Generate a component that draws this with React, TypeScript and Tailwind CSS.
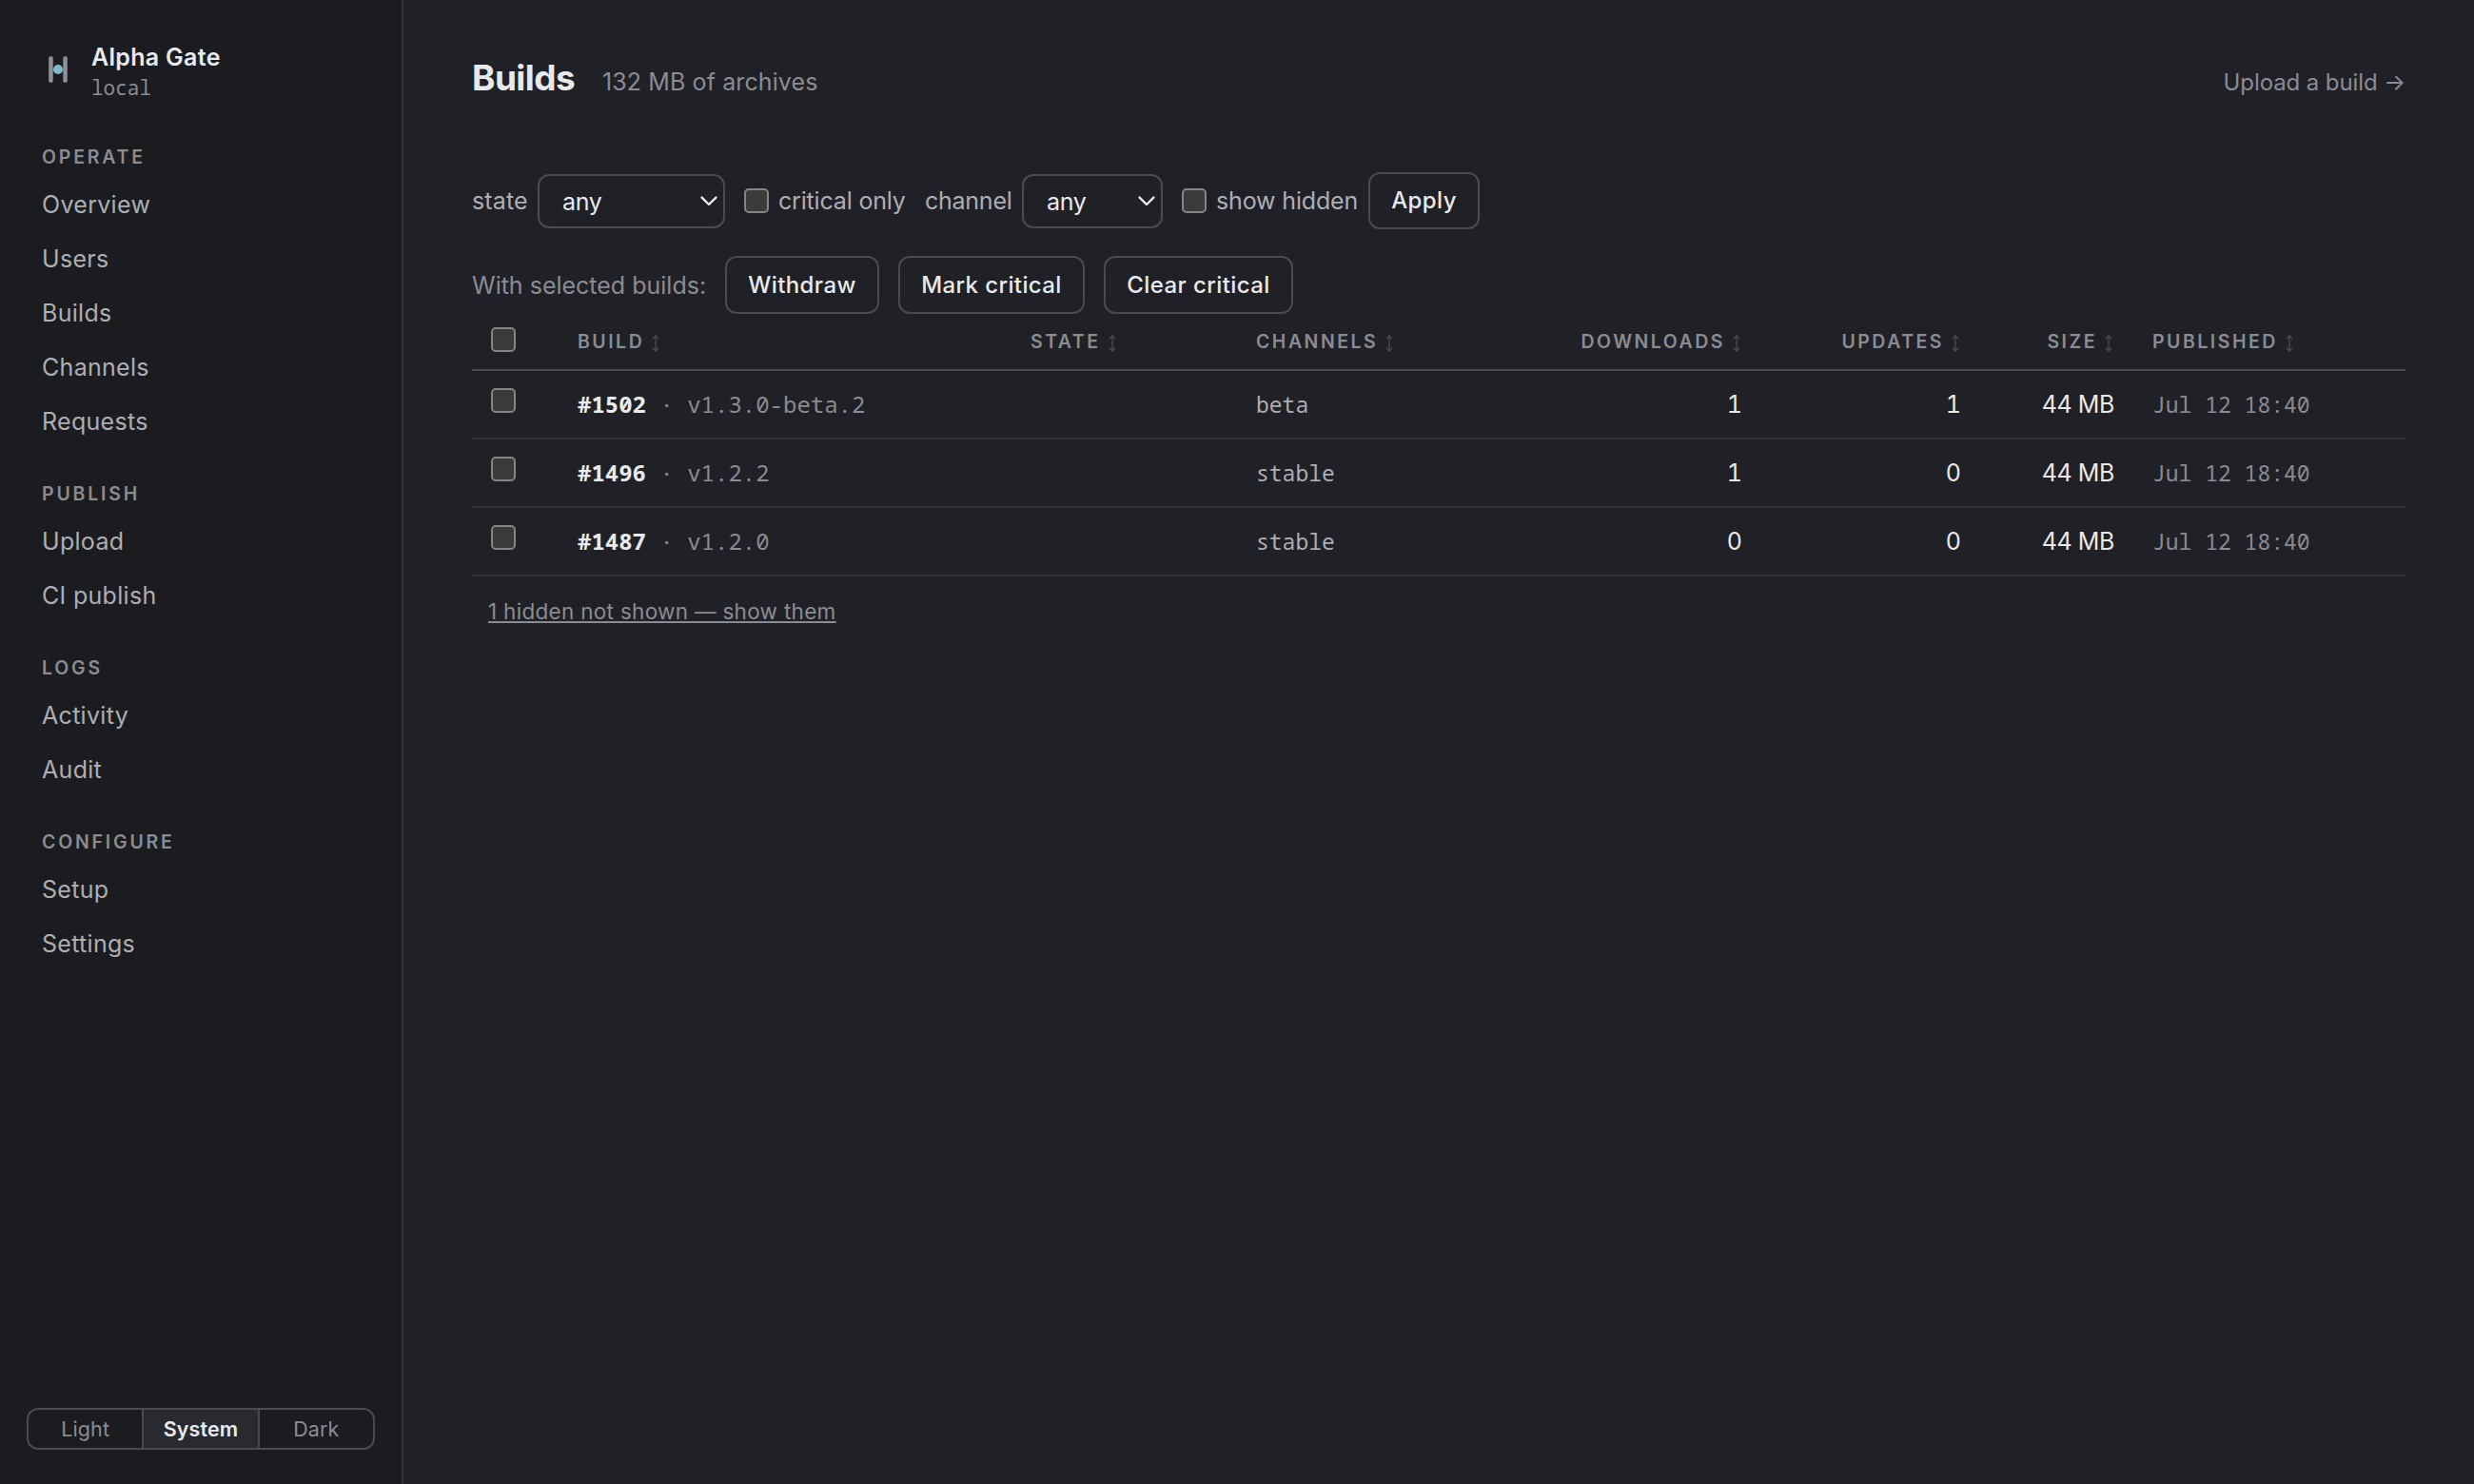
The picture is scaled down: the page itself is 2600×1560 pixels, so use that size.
import React from 'react';
import clsx from 'clsx';

interface NavGroup {
  title: string;
  items: string[];
}

interface Build {
  id: string;
  version: string;
  channel: string;
  downloads: number;
  updates: number;
  size: string;
  published: string;
}

const NAV: NavGroup[] = [
  { title: 'Operate', items: ['Overview', 'Users', 'Builds', 'Channels', 'Requests'] },
  { title: 'Publish', items: ['Upload', 'CI publish'] },
  { title: 'Logs', items: ['Activity', 'Audit'] },
  { title: 'Configure', items: ['Setup', 'Settings'] },
];

const BUILDS: Build[] = [
  { id: '#1502', version: 'v1.3.0-beta.2', channel: 'beta', downloads: 1, updates: 1, size: '44 MB', published: 'Jul 12 18:40' },
  { id: '#1496', version: 'v1.2.2', channel: 'stable', downloads: 1, updates: 0, size: '44 MB', published: 'Jul 12 18:40' },
  { id: '#1487', version: 'v1.2.0', channel: 'stable', downloads: 0, updates: 0, size: '44 MB', published: 'Jul 12 18:40' },
];

const THEMES = ['Light', 'System', 'Dark'];

const MONO = "font-['Noto_Sans_Mono','DejaVu_Sans_Mono',monospace]";

const Logo: React.FC = () => (
  <svg width="32" height="32" viewBox="0 0 32 32" className="mt-4 shrink-0">
    <rect x="6.2" y="1.3" width="4.5" height="27.4" rx="1.6" fill="#8f9098" />
    <rect x="21.3" y="1.3" width="4.5" height="27.4" rx="1.6" fill="#8f9098" />
    <circle cx="16" cy="15" r="5.1" fill="#7fb8c8" />
  </svg>
);

const SortIcon: React.FC = () => (
  <svg width="8" height="18" viewBox="0 0 8 18" fill="none" stroke="#4c4d52" strokeWidth="1.3" className="shrink-0">
    <path d="M4 1v16M1 4.4 4 .9l3 3.5M1 13.6l3 3.5 3-3.5" />
  </svg>
);

const Checkbox: React.FC = () => (
  <span role="checkbox" aria-checked="false" className="block size-[26px] shrink-0 rounded-[5px] border-2 border-[#858585] bg-[#3b3b3b]" />
);

const Select: React.FC<{ value: string; className: string }> = ({ value, className }) => (
  <div
    className={clsx(
      'mt-px flex h-[57px] items-center justify-between rounded-xl border-2 border-[#4a4b50] pt-px pr-[6px] pl-6 leading-[30px] tracking-[-0.4px] text-[#e8e9ed]',
      className,
    )}
  >
    <span>{value}</span>
    <svg width="18" height="12" viewBox="0 0 18 12" fill="none" stroke="#e8e9ed" strokeWidth="2.4" strokeLinecap="round" strokeLinejoin="round">
      <path d="M1.6 1.6 9 9l7.4-7.4" />
    </svg>
  </div>
);

const Button: React.FC<{ className: string; children: React.ReactNode }> = ({ className, children }) => (
  <button
    className={clsx(
      'flex items-center justify-center rounded-xl border-2 border-[#4a4b50] text-[24px] leading-[30px] font-medium tracking-[0.4px] text-[#e8e9ed]',
      className,
    )}
  >
    {children}
  </button>
);

const Th: React.FC<{ label: string; right?: boolean }> = ({ label, right }) => (
  <th className="px-5 py-[17px] font-semibold">
    <span className={clsx('flex items-center', right && 'justify-end pr-[2px]')}>
      <span className="mr-2">{label}</span>
      <span className="pt-[4px]">
        <SortIcon />
      </span>
    </span>
  </th>
);

const Sidebar: React.FC = () => (
  <aside className="flex w-[424px] shrink-0 flex-col border-r-2 border-[#36373c] bg-[#1b1c20] pt-[42px] pb-9">
    <div className="flex items-start gap-[19px] pl-[45px]">
      <Logo />
      <div className="pt-px">
        <div className="text-[25px] leading-[34px] font-semibold tracking-[0.3px] text-[#e8e9ed]">Alpha Gate</div>
        <div className={clsx(MONO, 'text-[21px] leading-[30px] text-[#8b8c92]')}>local</div>
      </div>
    </div>

    <nav className="mt-[46px] flex flex-col gap-[35px] pl-[44px]">
      {NAV.map((group) => (
        <div key={group.title}>
          <h2 className="mb-[10px] text-[19.5px] leading-6 font-semibold tracking-[2.8px] text-[#8b8c92] uppercase">
            {group.title}
          </h2>
          {group.items.map((item) => (
            <a key={item} className="block pt-[10px] pb-[11px] text-[25px] leading-9 tracking-[0.3px] text-[#adaeb4]">
              {item}
            </a>
          ))}
        </div>
      ))}
    </nav>

    <div className="mt-auto ml-[28px] flex h-11 w-[366px] divide-x-2 divide-[#4a4b50] overflow-hidden rounded-xl border-2 border-[#4a4b50] text-[21.5px]">
      {THEMES.map((theme) => (
        <button
          key={theme}
          className={clsx(
            'flex flex-auto basis-0 items-center justify-center leading-[26px] tracking-[0.1px]',
            theme === 'System' ? 'bg-[#292a2f] font-semibold text-[#e8e9ed]' : 'text-[#8b8c92]',
          )}
        >
          {theme}
        </button>
      ))}
    </div>
  </aside>
);

export default function App() {
  return (
    <div className="flex h-[1560px] w-[2600px] overflow-hidden bg-[#202126] font-['Inter',sans-serif] text-[25px] leading-[30px] text-[#e8e9ed]">
      <Sidebar />

      <main className="flex-1 px-[72px] pt-[59px]">
        <header className="flex items-baseline">
          <h1 className="text-[37px] leading-[45px] font-bold tracking-[-0.6px]">Builds</h1>
          <span className="ml-[29px] tracking-[0.1px] text-[#8b8c92]">132 MB of archives</span>
          <a className="ml-auto text-[24px] tracking-[-0.1px] text-[#8b8c92]">Upload a build →</a>
        </header>

        {/* Filters */}
        <div className="mt-[77px] flex h-[60px] items-center text-[#adaeb4]">
          <span className="w-[69px] tracking-[0.15px]">state</span>
          <Select value="any" className="w-[197px]" />
          <span className="mr-[10px] ml-5">
            <Checkbox />
          </span>
          <span className="w-[154px] tracking-[-0.18px]">critical only</span>
          <span className="w-[102px] tracking-[-0.25px]">channel</span>
          <Select value="any" className="w-[148px]" />
          <span className="mr-[10px] ml-5">
            <Checkbox />
          </span>
          <span className="w-[160px] tracking-[-0.15px]">show hidden</span>
          <Button className="h-[60px] w-[117px]">Apply</Button>
        </div>

        {/* Bulk actions */}
        <div className="mt-7 flex items-center gap-5">
          <span className="w-[246px] pt-px whitespace-nowrap text-[#8b8c92]">With selected builds:</span>
          <Button className="h-[61px] w-[162px]">Withdraw</Button>
          <Button className="h-[61px] w-[196px]">Mark critical</Button>
          <Button className="h-[61px] w-[199px]">Clear critical</Button>
        </div>

        <table className="w-full table-fixed border-collapse">
          <colgroup>
            <col className="w-[91px]" />
            <col className="w-[476px]" />
            <col className="w-[237px]" />
            <col className="w-[300px]" />
            <col className="w-[251px]" />
            <col className="w-[230px]" />
            <col className="w-[161px]" />
            <col className="w-[286px]" />
          </colgroup>
          <thead>
            <tr className="border-b-2 border-[#4a4b50] text-left text-[19.5px] leading-6 tracking-[2.5px] text-[#8b8c92] uppercase">
              <th className="pt-[14px] pl-5 align-top">
                <Checkbox />
              </th>
              <Th label="Build" />
              <Th label="State" />
              <Th label="Channels" />
              <Th label="Downloads" right />
              <Th label="Updates" right />
              <Th label="Size" right />
              <Th label="Published" />
            </tr>
          </thead>
          <tbody>
            {BUILDS.map((build) => (
              <tr key={build.id} className="h-[72px] border-b-2 border-[#323338] align-baseline">
                <td className="pt-[18px] pl-5 align-top">
                  <Checkbox />
                </td>
                <td className={clsx(MONO, 'px-5 pt-5 text-[24px] text-[#8b8c92]')}>
                  <span className="font-bold text-[#e8e9ed]">{build.id}</span> · {build.version}
                </td>
                <td />
                <td className={clsx(MONO, 'px-5 pt-5 text-[23px] text-[#adaeb4]')}>{build.channel}</td>
                <td className="px-5 pt-5 text-right tabular-nums">{build.downloads}</td>
                <td className="px-5 pt-5 text-right tabular-nums">{build.updates}</td>
                <td className="px-5 pt-5 text-right tracking-[-0.4px]">{build.size}</td>
                <td className={clsx(MONO, 'px-5 pt-5 text-[23px] text-[#8b8c92]')}>{build.published}</td>
              </tr>
            ))}
          </tbody>
        </table>

        <a className="mt-[23px] ml-[17px] inline-block text-[22.5px] leading-[27px] tracking-[0.3px] text-[#8b8c92] underline decoration-2 underline-offset-[2px]">
          1 hidden not shown — show them
        </a>
      </main>
    </div>
  );
}
